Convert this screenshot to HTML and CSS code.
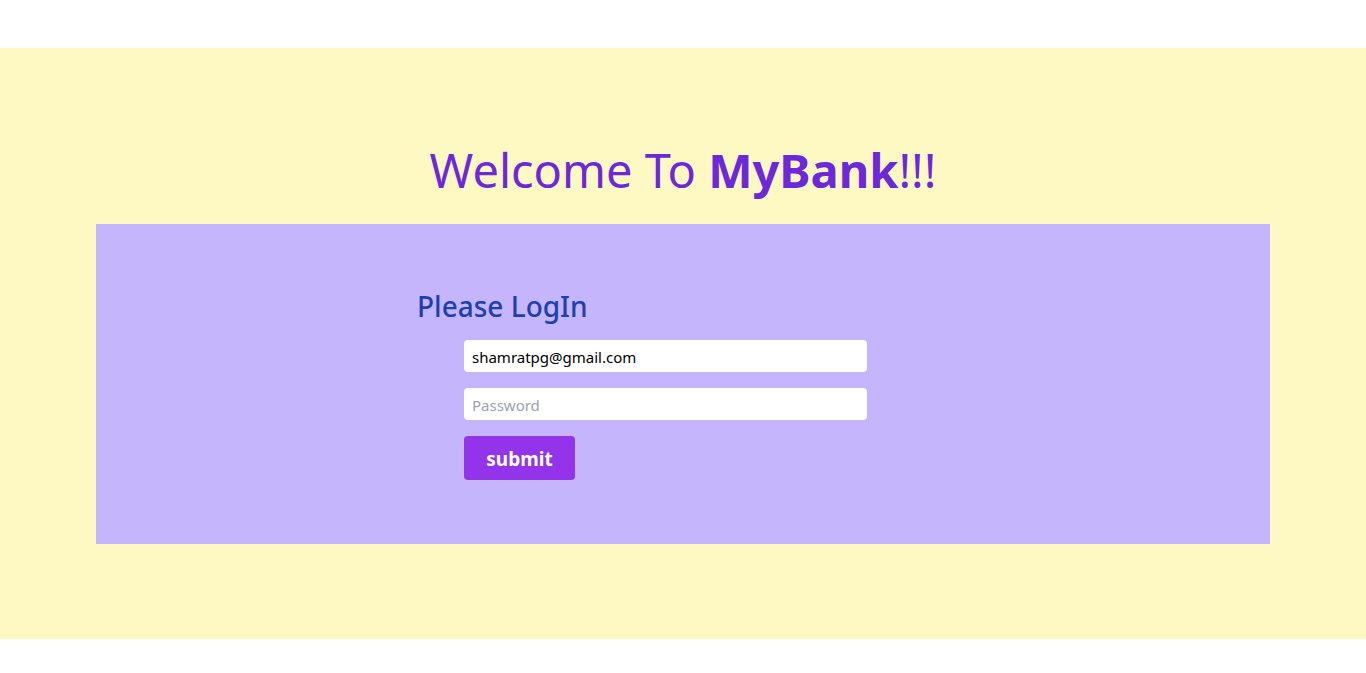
FILE: index.html
```html
<!DOCTYPE html>
<html>
<head>
<meta charset="utf-8">
<link rel="stylesheet" href="styles.css">
</head>
<body>
<section class="hero">
  <h1 class="title">Welcome To <b>MyBank</b>!!!</h1>
  <div class="panel">
    <form class="login">
      <h2 class="login-title">Please LogIn</h2>
      <div class="fields">
        <input class="field" type="email" value="shamratpg@gmail.com">
        <input class="field" type="password" placeholder="Password">
        <button class="submit" type="button">submit</button>
      </div>
    </form>
  </div>
</section>
</body>
</html>
```
FILE: styles.css
```css
* { box-sizing: border-box; }
body {
  margin: 0;
  font-family: "Noto Sans", "Open Sans", sans-serif;
  background: #fff;
}
.hero {
  margin-top: 48px;
  background: #fef9c3;
  padding: 98px 0 95px;
}
.title {
  margin: 0 0 30px;
  text-align: center;
  font-size: 47px;
  line-height: 48px;
  font-weight: 400;
  color: #6d28d9;
}
.title b { font-weight: 700; }
.panel {
  margin: 0 96px;
  background: #c4b5fd;
  padding: 64px 0 64px 321px;
}
.login { margin: 0; }
.login-title {
  margin: 0 0 16px;
  font-size: 28px;
  line-height: 36px;
  font-weight: 500;
  color: #1e40af;
}
.fields {
  padding-left: 47px;
  display: flex;
  flex-direction: column;
  align-items: flex-start;
  gap: 16px;
}
.field {
  width: 403px;
  height: 32px;
  border: 0;
  border-radius: 4px;
  background: #fff;
  padding: 2px 8px 0;
  font-family: inherit;
  font-size: 15px;
  color: #000;
  outline: none;
}
.field::placeholder { color: #9ca3af; }
.submit {
  width: 111px;
  height: 44px;
  border: 0;
  border-radius: 4px;
  background: #9333ea;
  color: #fff;
  font-family: inherit;
  font-size: 19px;
  font-weight: 700;
  padding-top: 2px;
  cursor: pointer;
}
```
